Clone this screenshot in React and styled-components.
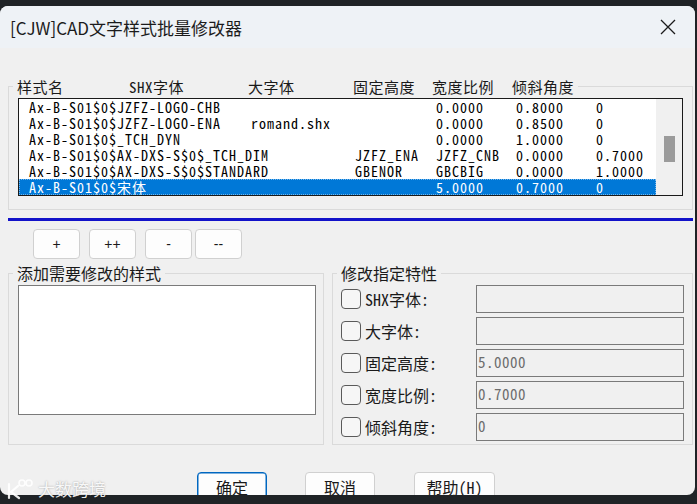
import React from 'react'
import styled, { createGlobalStyle } from 'styled-components'

const MONO = `"Noto Sans Mono CJK SC", "Liberation Mono", "Noto Sans CJK SC", monospace`
const SANS = `"Noto Sans CJK SC", "Liberation Sans", sans-serif`

const rows = [
  ['Ax-B-S01$0$JZFZ-LOGO-CHB', '', '', '0.0000', '0.8000', '0'],
  ['Ax-B-S01$0$JZFZ-LOGO-ENA', 'romand.shx', '', '0.0000', '0.8500', '0'],
  ['Ax-B-S01$0$_TCH_DYN', '', '', '0.0000', '1.0000', '0'],
  ['Ax-B-S01$0$AX-DXS-S$0$_TCH_DIM', '', 'JZFZ_ENA', 'JZFZ_CNB', '0.0000', '0.7000'],
  ['Ax-B-S01$0$AX-DXS-S$0$STANDARD', '', 'GBENOR', 'GBCBIG', '0.0000', '1.0000'],
  ['Ax-B-S01$0$宋体', '', '', '5.0000', '0.7000', '0'],
]

const headers = [
  ['样式名', 112],
  ['SHX字体', 119],
  ['大字体', 105],
  ['固定高度', 79],
  ['宽度比例', 80],
  ['倾斜角度', 0],
]

const props = [
  ['SHX字体:', ''],
  ['大字体:', ''],
  ['固定高度:', '5.0000'],
  ['宽度比例:', '0.7000'],
  ['倾斜角度:', '0'],
]

const GlobalStyle = createGlobalStyle`
  html, body {
    margin: 0;
    padding: 0;
    background: #1f2326;
  }
  body {
    width: 697px;
    height: 504px;
    overflow: hidden;
  }
  * { box-sizing: border-box; }
`

const Screen = styled.div`
  position: relative;
  width: 697px;
  height: 504px;
  padding-top: 6px;
`

const Dialog = styled.div`
  width: 695px;
  height: 489px;
  background: #f0f0f0;
  border-radius: 8px;
  overflow: hidden;
  display: flex;
  flex-direction: column;
`

const TitleBar = styled.div`
  height: 42px;
  flex: none;
  background: #eef2f6;
  display: flex;
  align-items: center;
  padding: 0 19px 0 10px;
  font-family: ${SANS};
  font-size: 17px;
  color: #1b1b1b;
`

const Title = styled.div`
  flex: 1;
`

const Body = styled.div`
  flex: 1;
  padding: 38px 2px 0 8px;
`

const Group = styled.div`
  position: relative;
  border: 1px solid #dadada;
  width: ${p => p.$w}px;
  height: ${p => (p.$h ? p.$h + 'px' : 'auto')};
  padding: ${p => p.$pad};
`

const Caption = styled.div`
  position: absolute;
  left: 4px;
  top: ${p => p.$top}px;
  padding: 0 4px;
  background: #f0f0f0;
  display: flex;
  font-family: ${p => (p.$mono ? MONO : SANS)};
  font-size: ${p => (p.$mono ? 15 : 16)}px;
  letter-spacing: ${p => (p.$mono ? 0.5 : 0)}px;
  line-height: ${p => p.$lh}px;
  color: #1a1a1a;
  white-space: nowrap;
`

const HeadCell = styled.span`
  width: ${p => (p.$w ? p.$w + 'px' : 'auto')};
`

const ListBox = styled.div`
  height: 98px;
  border: 1px solid #1a1a1a;
  background: #fff;
  display: flex;
`

const Rows = styled.div`
  flex: 1;
`

const Row = styled.div`
  height: 16px;
  display: grid;
  grid-template-columns: 222px 104px 81px 80px 80px 1fr;
  padding-left: 10px;
  font-family: ${MONO};
  font-size: 14px;
  letter-spacing: 1px;
  line-height: 16px;
  white-space: nowrap;
  color: ${p => (p.$sel ? '#fff' : '#000')};
  background: ${p => (p.$sel ? '#0078d7' : 'transparent')};
  outline: ${p => (p.$sel ? '1px dotted rgba(255,255,255,0.45)' : 'none')};
  outline-offset: -1px;
`

const Cell = styled.span`
  overflow: visible;
`

const ScrollTrack = styled.div`
  width: 26px;
  flex: none;
  background: #f0f0f0;
  padding: 37px 0 0 8px;
`

const Thumb = styled.div`
  width: 11px;
  height: 26px;
  background: #9b9b9b;
`

const Rule = styled.div`
  margin-top: 8px;
  width: 685px;
  height: 3px;
  background: #1212c9;
`

const ToolRow = styled.div`
  display: flex;
  margin-top: 8px;
  padding-left: 25px;
`

const SmallBtn = styled.button`
  width: 47px;
  height: 30px;
  margin-left: ${p => p.$ml}px;
  background: #fdfdfd;
  border: 1px solid #d0d0d0;
  border-radius: 4px;
  font-family: "Liberation Sans", sans-serif;
  font-size: 14px;
  color: #1a1a1a;
  padding: 0;
`

const Lower = styled.div`
  display: flex;
  gap: 8px;
  margin-top: 14px;
`

const StyleList = styled.div`
  width: 298px;
  height: 130px;
  border: 1px solid #7a7a7a;
  background: #fff;
`

const PropList = styled.div`
  display: flex;
  flex-direction: column;
  gap: 4px;
`

const PropRow = styled.div`
  display: flex;
  align-items: center;
  height: 28px;
`

const Check = styled.span`
  width: 20px;
  height: 20px;
  border: 1px solid #5a5a5a;
  border-radius: 4px;
  background: #f6f6f6;
  flex: none;
`

const PropLabel = styled.span`
  margin-left: 4px;
  font-family: ${MONO};
  font-size: 16px;
  color: #1a1a1a;
`

const Field = styled.div`
  margin-left: auto;
  width: 208px;
  height: 28px;
  border: 1px solid #7a7a7a;
  background: #f0f0f0;
  padding: 3px 0 0 1px;
  font-family: ${MONO};
  font-size: 15px;
  letter-spacing: 0.5px;
  line-height: 18px;
  color: #6d6d6d;
`

const Footer = styled.div`
  display: flex;
  margin-top: 27px;
  padding-left: 189px;
`

const DlgBtn = styled.button`
  width: ${p => p.$w}px;
  height: 30px;
  flex: none;
  margin-left: ${p => p.$ml}px;
  background: #fdfdfd;
  border: 1px solid ${p => (p.$primary ? '#0067c0' : '#d0d0d0')};
  box-shadow: ${p => (p.$primary ? 'inset 0 0 0 0.5px #0067c0' : 'none')};
  border-radius: 4px;
  font-family: ${MONO};
  font-size: 16px;
  color: #1a1a1a;
  padding: 0;
`

const Watermark = styled.div`
  position: absolute;
  left: 6px;
  top: 476px;
  display: flex;
  align-items: center;
  gap: 4px;
  font-family: ${SANS};
  font-size: 17px;
  color: rgba(255, 255, 255, 0.92);
  text-shadow: 0 0 2px rgba(0, 0, 0, 0.35);
`

function CloseIcon() {
  return (
    <svg width="16" height="16" viewBox="0 0 16 16">
      <path d="M1 1L15 15M15 1L1 15" stroke="#1b1b1b" strokeWidth="1.3" fill="none" />
    </svg>
  )
}

function MarkLogo() {
  return (
    <svg width="28" height="22" viewBox="0 0 28 22">
      <g stroke="rgba(255,255,255,0.9)" strokeWidth="2.2" fill="none" strokeLinecap="round">
        <path d="M3 6v14" />
        <path d="M12 8l-7 6 8 6" />
        <circle cx="16" cy="5" r="3" strokeWidth="1.6" />
        <circle cx="23" cy="5" r="3" strokeWidth="1.6" />
      </g>
    </svg>
  )
}

export default function App() {
  return (
    <>
      <GlobalStyle />
      <Screen>
        <Dialog>
          <TitleBar>
            <Title>[CJW]CAD文字样式批量修改器</Title>
            <CloseIcon />
          </TitleBar>
          <Body>
            <Group $w={685} $pad="11px 9px 13px 9px">
              <Caption $top={-9} $lh={17} $mono>
                {headers.map(([t, w]) => (
                  <HeadCell key={t} $w={w}>{t}</HeadCell>
                ))}
              </Caption>
              <ListBox>
                <Rows>
                  {rows.map((r, i) => (
                    <Row key={i} $sel={i === rows.length - 1}>
                      {r.map((c, j) => (
                        <Cell key={j}>{c}</Cell>
                      ))}
                    </Row>
                  ))}
                </Rows>
                <ScrollTrack>
                  <Thumb />
                </ScrollTrack>
              </ListBox>
            </Group>

            <Rule />

            <ToolRow>
              <SmallBtn $ml={0}>+</SmallBtn>
              <SmallBtn $ml={9}>++</SmallBtn>
              <SmallBtn $ml={9}>-</SmallBtn>
              <SmallBtn $ml={3}>--</SmallBtn>
            </ToolRow>

            <Lower>
              <Group $w={316} $h={172} $pad="11px 0 0 9px">
                <Caption $top={-10} $lh={18}>添加需要修改的样式</Caption>
                <StyleList />
              </Group>
              <Group $w={361} $h={172} $pad="11px 8px 0 8px">
                <Caption $top={-10} $lh={18}>修改指定特性</Caption>
                <PropList>
                  {props.map(([label, value]) => (
                    <PropRow key={label}>
                      <Check />
                      <PropLabel>{label}</PropLabel>
                      <Field>{value}</Field>
                    </PropRow>
                  ))}
                </PropList>
              </Group>
            </Lower>

            <Footer>
              <DlgBtn $w={70} $ml={0} $primary>确定</DlgBtn>
              <DlgBtn $w={70} $ml={38}>取消</DlgBtn>
              <DlgBtn $w={81} $ml={39}>帮助(H)</DlgBtn>
            </Footer>
          </Body>
        </Dialog>
        <Watermark>
          <MarkLogo />
          <span>大数跨境</span>
        </Watermark>
      </Screen>
    </>
  )
}
